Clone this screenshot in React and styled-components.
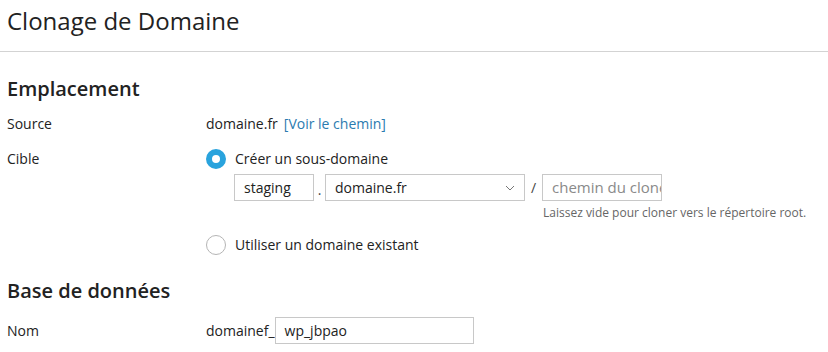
import React from 'react';
import styled, { createGlobalStyle } from 'styled-components';

const GlobalStyle = createGlobalStyle`
  html, body {
    margin: 0;
    padding: 0;
    background: #fff;
  }
  body {
    font-family: "Open Sans", "Liberation Sans", sans-serif;
    font-size: 14px;
    color: #222;
  }
`;

const Page = styled.div`
  width: 828px;
  height: 352px;
  overflow: hidden;
  box-sizing: border-box;
`;

const Header = styled.div`
  padding: 0 0 0 7px;
  border-bottom: 1px solid #d3d3d3;
  height: 52px;
  box-sizing: border-box;
`;

const Title = styled.h1`
  margin: 0;
  padding-top: 4px;
  font-size: 24px;
  font-weight: 400;
  line-height: 34px;
  color: #222;
`;

const Body = styled.div`
  padding: 0 7px;
`;

const SectionTitle = styled.h2`
  margin: ${p => p.$top}px 0 ${p => p.$bottom}px;
  font-size: 20px;
  font-weight: 600;
  line-height: 26px;
  color: #222;
`;

const Row = styled.div`
  display: grid;
  grid-template-columns: 199px 1fr;
  align-items: start;
  min-height: ${p => p.$height || 35}px;
`;

const Label = styled.div`
  line-height: 20px;
  padding-top: ${p => p.$pad || 0}px;
`;

const Value = styled.div`
  display: flex;
  flex-direction: column;
`;

const Inline = styled.div`
  display: flex;
  align-items: center;
  line-height: 20px;
`;

const Link = styled.a`
  color: #2b7bb0;
  text-decoration: none;
  margin-left: 6px;
`;

const RadioLine = styled.label`
  display: flex;
  align-items: center;
  gap: 9px;
  line-height: 20px;
  margin-top: ${p => p.$top || 0}px;
`;

const RadioDot = styled.span`
  width: 20px;
  height: 20px;
  border-radius: 50%;
  box-sizing: border-box;
  border: ${p => (p.$checked ? '6px solid #29a3dd' : '1px solid #b5b5b5')};
  background: #fff;
  flex: none;
`;

const Fields = styled.div`
  display: flex;
  align-items: center;
  margin-left: 28px;
  margin-top: 5px;
`;

const TextBox = styled.div`
  width: ${p => p.$width}px;
  height: 27px;
  box-sizing: border-box;
  border: 1px solid #c8c8c8;
  background: #fff;
  padding: ${p => (p.$placeholder ? '0 0 0 9px' : '0 9px')};
  line-height: 25px;
  font-size: ${p => (p.$placeholder ? 15 : 14)}px;
  color: ${p => (p.$placeholder ? '#8a8a8a' : '#222')};
  white-space: nowrap;
  overflow: hidden;
  display: flex;
  align-items: center;
  justify-content: space-between;
`;

const Sep = styled.span`
  width: ${p => p.$width}px;
  text-align: center;
  color: #444;
  padding-top: ${p => p.$drop || 0}px;
`;

const Hint = styled.div`
  margin-left: 337px;
  margin-top: 4px;
  font-size: 12px;
  color: #666;
  line-height: 16px;
`;

const Chevron = () => (
  <svg width="10" height="6" viewBox="0 0 10 6">
    <path d="M1 1 L5 5 L9 1" fill="none" stroke="#777" strokeWidth="1" />
  </svg>
);

const App = () => {
  return (
    <Page>
      <GlobalStyle />
      <Header>
        <Title>Clonage de Domaine</Title>
      </Header>
      <Body>
        <SectionTitle $top={24} $bottom={12}>Emplacement</SectionTitle>
        <Row $height={35}>
          <Label>Source</Label>
          <Inline>
            domaine.fr<Link>[Voir le chemin]</Link>
          </Inline>
        </Row>
        <Row $height={119}>
          <Label>Cible</Label>
          <Value>
            <RadioLine>
              <RadioDot $checked />
              Créer un sous-domaine
            </RadioLine>
            <Fields>
              <TextBox $width={80}>staging</TextBox>
              <Sep $width={11} $drop={4}>.</Sep>
              <TextBox $width={200}>
                domaine.fr
                <Chevron />
              </TextBox>
              <Sep $width={17}>/</Sep>
              <TextBox $width={120} $placeholder>chemin du clone</TextBox>
            </Fields>
            <Hint>Laissez vide pour cloner vers le répertoire root.</Hint>
            <RadioLine $top={14}>
              <RadioDot />
              Utiliser un domaine existant
            </RadioLine>
          </Value>
        </Row>
        <SectionTitle $top={10} $bottom={13}>Base de données</SectionTitle>
        <Row>
          <Label $pad={4}>Nom</Label>
          <Inline>
            domainef_
            <TextBox $width={199}>wp_jbpao</TextBox>
          </Inline>
        </Row>
      </Body>
    </Page>
  );
};

export default App;
